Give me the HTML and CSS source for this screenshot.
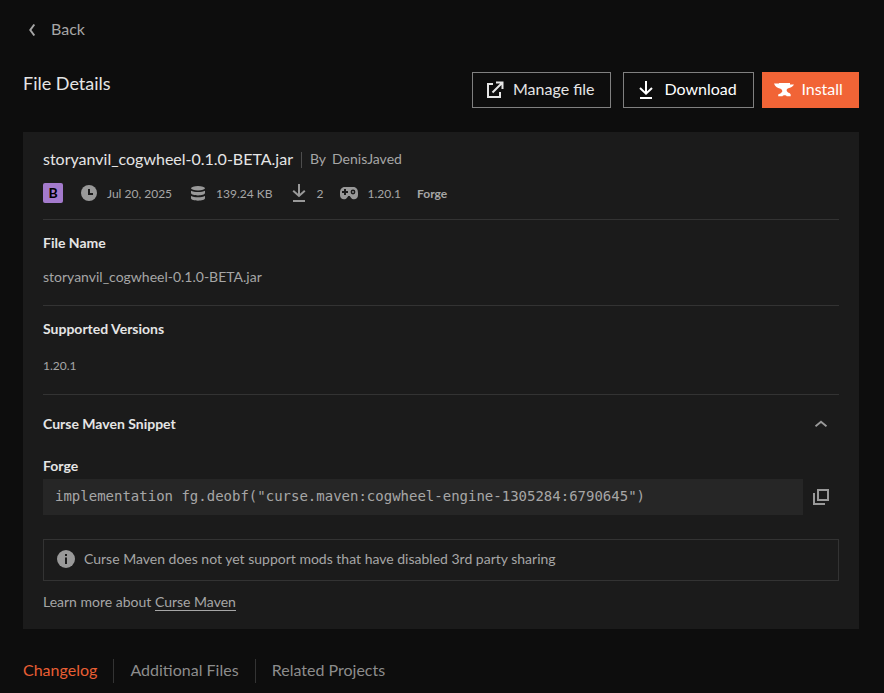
FILE: index.html
```html
<!DOCTYPE html>
<html lang="en">
<head>
<meta charset="utf-8">
<title>File Details</title>
<link rel="stylesheet" href="styles.css">
</head>
<body>
<a class="back"><svg width="8" height="14" viewBox="0 0 8 14"><path d="M6.3 1.5L2.3 7L6.3 12.5" fill="none" stroke="currentColor" stroke-width="2"/></svg><span>Back</span></a>
<header class="page-head">
  <h1>File Details</h1>
  <div class="actions">
    <a class="btn manage"><svg width="18" height="18" viewBox="0 0 18 18"><path d="M7 3H2V16H14V11M10 1.5H16.5V8M16 2L6.5 11.5" fill="none" stroke="currentColor" stroke-width="2"/></svg><span>Manage file</span></a>
    <a class="btn download"><svg width="14" height="19" viewBox="0 0 14 19"><path d="M7 0V12.5M1 7L7 12.7L13 7M1 17H13" fill="none" stroke="currentColor" stroke-width="2"/></svg><span>Download</span></a>
    <a class="btn install"><svg width="20" height="14" viewBox="0 0 20 14"><path d="M5 0H16V1.4H20C18.8 3.6 16.7 4.6 14.3 5.2C12.2 5.9 12.2 7.8 13.5 9C14.8 10 16.3 10.2 16.7 11.4V13.2H12.7C12.3 11.9 9 11.9 8.5 13.2H4.2V11.4C5.4 11 7.5 10 8.3 8.4C8.3 7.3 7.9 6.6 6.5 5.8C3.2 5.2 1 3.4 0 .6H5Z" fill="currentColor"/></svg><span>Install</span></a>
  </div>
</header>
<main class="card">
  <div class="title"><h2>storyanvil_cogwheel-0.1.0-BETA.jar</h2><p class="author"><span>By</span><span>DenisJaved</span></p></div>
  <div class="meta">
    <span class="badge">B</span>
    <span class="item date"><svg width="16" height="16" viewBox="0 0 16 16"><circle cx="8" cy="8" r="8" fill="currentColor"/><path d="M8 4V9H12" fill="none" stroke="#1b1b1b" stroke-width="2"/></svg><span>Jul 20, 2025</span></span>
    <span class="item size"><svg width="14" height="15" viewBox="0 0 14 15" fill="currentColor"><ellipse cx="7" cy="2.2" rx="7" ry="2.2"/><path d="M0 4.7C3 6.4 11 6.4 14 4.7V7C14 10.2 0 10.2 0 7ZM0 10C3 11.7 11 11.7 14 10V12.3C14 15.5 0 15.5 0 12.3Z"/></svg><span>139.24 KB</span></span>
    <span class="item count"><svg width="14" height="18" viewBox="0 0 14 18"><path d="M7 0V12M1.2 6.8L7 12L12.8 6.8M1 17H13" fill="none" stroke="currentColor" stroke-width="2"/></svg><span>2</span></span>
    <span class="item version"><svg width="18" height="13" viewBox="0 0 18 13"><path d="M5 0H13C16.5 0 18 2.4 18 6V8C18 13 12.5 13.5 10.8 10.5L9.8 9H8.2L7.2 10.5C5.5 13.5 0 13 0 8V6C0 2.4 1.5 0 5 0Z" fill="currentColor"/><path d="M5 2V8M2 5H8" stroke="#1b1b1b" stroke-width="2"/><circle cx="13" cy="5" r="2.4" fill="#1b1b1b"/><circle cx="13" cy="5" r=".9" fill="currentColor"/></svg><span>1.20.1</span></span>
    <span class="loader">Forge</span>
  </div>
  <section class="file-name"><h3>File Name</h3><p>storyanvil_cogwheel-0.1.0-BETA.jar</p></section>
  <section class="versions"><h3>Supported Versions</h3><p>1.20.1</p></section>
  <section class="snippet">
    <div class="snippet-head"><h3>Curse Maven Snippet</h3><svg width="12" height="8" viewBox="0 0 12 8"><path d="M.5 6.3L6 1.7L11.5 6.3" fill="none" stroke="currentColor" stroke-width="2"/></svg></div>
    <h4>Forge</h4>
    <div class="code-row"><code>implementation fg.deobf("curse.maven:cogwheel-engine-1305284:6790645")</code><svg width="16" height="16" viewBox="0 0 16 16"><path d="M5 1H15V11H5ZM1 4V15H12" fill="none" stroke="currentColor" stroke-width="2"/></svg></div>
    <div class="notice"><svg width="18" height="18" viewBox="0 0 18 18"><circle cx="9" cy="9" r="9" fill="currentColor"/><path d="M8 4H10V6H8ZM8 7.5H10V14H8Z" fill="#1b1b1b"/></svg><span>Curse Maven does not yet support mods that have disabled 3rd party sharing</span></div>
    <p class="learn">Learn more about <a>Curse Maven</a></p>
  </section>
</main>
<nav class="tabs"><a class="active">Changelog</a><a>Additional Files</a><a>Related Projects</a></nav>
</body>
</html>
```

FILE: styles.css
```css
* { box-sizing: border-box; }
body {
  margin: 0;
  padding: 18px 25px 0 23px;
  height: 693px;
  overflow: hidden;
  background: #0d0d0d;
  color: #a6a6a6;
  font: 14px/20px Lato, sans-serif;
}
h1, h2, h3, h4, p { margin: 0; }
svg { display: block; flex: none; color: #999; }
.back { display: flex; align-items: center; height: 24px; padding-left: 5px; gap: 15px; font-size: 16px; line-height: 22px; }
.back span { padding-bottom: 2px; }
.back svg { color: #a6a6a6; }
.page-head { display: flex; justify-content: space-between; height: 36px; margin: 30px 0 24px; }
h1 { font-size: 18px; line-height: 22px; font-weight: 400; color: #e5e5e5; }
.actions { display: flex; }
.btn { display: flex; align-items: center; height: 36px; border: 1px solid #808080; color: #e5e5e5; font-size: 16px; white-space: nowrap; }
.btn svg { color: inherit; }
.btn span { padding-bottom: 2px; }
.manage { width: 139px; margin-right: 12px; padding-left: 13px; gap: 9px; }
.download { width: 131px; margin-right: 8px; padding-left: 15px; gap: 11.4px; color: #fff; }
.install { width: 97px; padding-left: 11px; gap: 7.4px; background: #f16436; border-color: #f16436; color: #fff; }
.card { height: 497px; padding: 16px 20px 0; background: #1b1b1b; }
.title { display: flex; align-items: center; height: 24px; }
h2 { padding-bottom: 2px; font-size: 16px; font-weight: 400; color: #e5e5e5; }
.author { display: flex; gap: 6px; height: 16px; line-height: 14px; margin-left: 8px; padding-left: 8px; border-left: 1px solid #4d4d4d; }
.meta { display: flex; align-items: center; height: 20px; margin-top: 11px; font-size: 12px; white-space: nowrap; }
.badge { width: 20px; height: 20px; border-radius: 2px; background: #a37acc; color: #000; text-align: center; font-size: 14px; font-weight: 700; }
.item { display: flex; align-items: center; }
.item span, .loader { padding-top: 2px; }
.date { width: 91px; margin-left: 18px; gap: 10px; }
.size { width: 82px; margin-left: 19px; gap: 11px; }
.count { width: 32px; margin-left: 19px; gap: 10.6px; }
.version { width: 61px; margin-left: 16px; gap: 9.5px; }
.loader { margin-left: 16px; font-weight: 700; }
section { border-top: 1px solid #333; }
h3, h4 { font-size: 14px; line-height: 20px; font-weight: 700; color: #e5e5e5; }
.file-name { height: 86px; margin-top: 16px; padding-top: 13px; }
.file-name p { margin-top: 14px; }
.versions { height: 89px; padding-top: 13px; }
.versions p { margin-top: 17px; font-size: 12px; }
.snippet { padding-top: 19px; }
.snippet-head { display: flex; align-items: center; justify-content: space-between; padding-right: 12px; }
h4 { margin-top: 22px; }
.code-row { display: flex; align-items: center; gap: 10px; height: 36px; margin-top: 3px; }
code { width: 760px; height: 36px; padding-left: 12px; background: #262626; font: 14px/35px "DejaVu Sans Mono", monospace; }
.notice { display: flex; align-items: center; gap: 9px; height: 42px; margin-top: 24px; padding: 0 0 2px 13px; border: 1px solid #333; }
.learn { margin-top: 11px; }
.learn a { border-bottom: 1px solid #a6a6a6; }
.tabs { display: flex; height: 24px; margin-top: 30px; font-size: 16px; line-height: 22px; color: #8c8c8c; }
.tabs a + a { margin-left: 16.2px; padding-left: 16px; border-left: 1px solid #333; }
.tabs .active { color: #e95f34; }
```
